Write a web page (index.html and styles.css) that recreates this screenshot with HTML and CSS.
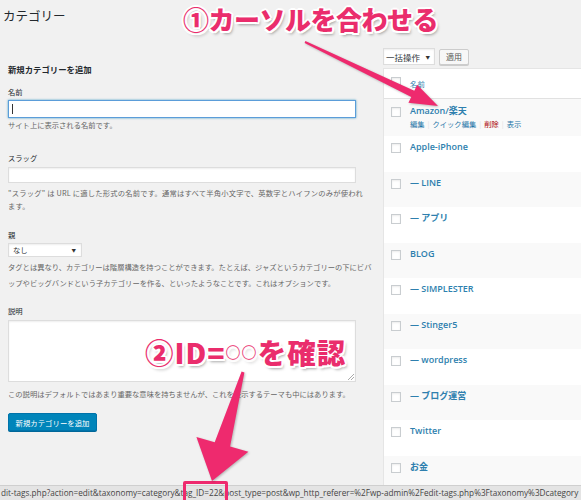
FILE: index.html
```html
<!DOCTYPE html>
<html lang="ja">
<head>
<meta charset="utf-8">
<title>カテゴリー</title>
<link rel="stylesheet" href="styles.css">
</head>
<body>
<div class="page">
  <h1 class="title">カテゴリー</h1>
  <div class="cols">
    <div class="col-left">
      <h2 class="form-title">新規カテゴリーを追加</h2>

      <div class="field f-name">
        <div class="label">名前</div>
        <div class="input focus"><span class="caret"></span></div>
        <p class="desc">サイト上に表示される名前です。</p>
      </div>

      <div class="field f-slug">
        <div class="label">スラッグ</div>
        <div class="input slug"></div>
        <p class="desc">"スラッグ" は URL に適した形式の名前です。通常はすべて半角小文字で、英数字とハイフンのみが使われ<br>ます。</p>
      </div>

      <div class="field f-parent">
        <div class="label">親</div>
        <div class="select parent"><span>なし</span><span class="arr">▼</span></div>
        <p class="desc">タグとは異なり、カテゴリーは階層構造を持つことができます。たとえば、ジャズというカテゴリーの下にビバ<br>ップやビッグバンドという子カテゴリーを作る、といったようなことです。これはオプションです。</p>
      </div>

      <div class="field f-desc">
        <div class="label">説明</div>
        <div class="textarea"></div>
        <p class="desc">この説明はデフォルトではあまり重要な意味を持ちませんが、これを表示するテーマも中にはあります。</p>
      </div>

      <div class="button-primary">新規カテゴリーを追加</div>
    </div>

    <div class="col-right">
      <div class="tablenav">
        <div class="select bulk"><span>一括操作</span><span class="arr">▼</span></div>
        <div class="button">適用</div>
      </div>
      <div class="table">
        <div class="thead">
          <span class="cb"></span><span class="col-name">名前</span>
        </div>
        <div class="trow alt first">
          <span class="cb"></span>
          <div class="cell">
            <div class="name">Amazon/楽天</div>
            <div class="actions"><span class="act">編集</span><span class="sep">|</span><span class="act">クイック編集</span><span class="sep">|</span><span class="act del">削除</span><span class="sep">|</span><span class="act">表示</span></div>
          </div>
        </div>
        <div class="trow"><span class="cb"></span><div class="cell"><div class="name">Apple-iPhone</div></div></div>
        <div class="trow alt"><span class="cb"></span><div class="cell"><div class="name">— LINE</div></div></div>
        <div class="trow"><span class="cb"></span><div class="cell"><div class="name">— アプリ</div></div></div>
        <div class="trow alt"><span class="cb"></span><div class="cell"><div class="name">BLOG</div></div></div>
        <div class="trow"><span class="cb"></span><div class="cell"><div class="name">— SIMPLESTER</div></div></div>
        <div class="trow alt"><span class="cb"></span><div class="cell"><div class="name">— Stinger5</div></div></div>
        <div class="trow"><span class="cb"></span><div class="cell"><div class="name">— wordpress</div></div></div>
        <div class="trow alt"><span class="cb"></span><div class="cell"><div class="name">— ブログ運営</div></div></div>
        <div class="trow"><span class="cb"></span><div class="cell"><div class="name">Twitter</div></div></div>
        <div class="trow alt"><span class="cb"></span><div class="cell"><div class="name">お金</div></div></div>
      </div>
    </div>
  </div>

  <div class="statusbar">dit-tags.php?action=edit&amp;taxonomy=category&amp;tag_ID=22&amp;post_type=post&amp;wp_http_referer=%2Fwp-admin%2Fedit-tags.php%3Ftaxonomy%3Dcategory</div>
  <div class="idbox"></div>

  <svg class="arrows" width="581" height="500" viewBox="0 0 581 500" xmlns="http://www.w3.org/2000/svg">
    <polygon points="305.4,41.1 414.3,90.7 417.2,84.8 438,106 408.4,102.8 411.3,96.9 304.6,42.9" fill="#ee2a6e"/>
    <polygon points="244.4,372.4 230.1,446.6 248.4,451.8 212,481 196.4,437 214.7,442.2 241.6,371.6" fill="#ee2a6e"/>
  </svg>

  <div class="note note1">①カーソルを合わせる</div>
  <div class="note note2">②ID=<span class="dots">○○</span>を確認</div>
</div>
</body>
</html>
```

FILE: styles.css
```css
* { box-sizing: border-box; }

html, body {
  margin: 0;
  padding: 0;
  background: #f1f1f1;
}

body {
  font-family: "Noto Sans CJK JP", "Open Sans", sans-serif;
  color: #444;
  overflow: hidden;
}

.page {
  position: relative;
  width: 581px;
  height: 500px;
  overflow: hidden;
}

.title {
  margin: 0 0 25px 0;
  padding: 9px 0 0 3px;
  font-size: 12.5px;
  line-height: 14px;
  font-weight: 400;
  color: #23282d;
}

.cols {
  display: flex;
  padding-left: 8px;
  gap: 9px;
}

.col-left {
  width: 366px;
  flex: none;
}

.form-title {
  margin: 15px 0 0 0;
  font-size: 8.4px;
  line-height: 12px;
  font-weight: 700;
  color: #23282d;
}

.label {
  font-size: 7.3px;
  line-height: 12px;
  color: #23282d;
}

.desc {
  margin: 0;
  font-size: 7.3px;
  line-height: 12px;
  color: #666;
  white-space: nowrap;
}

.input {
  width: 348px;
  height: 18px;
  background: #fff;
  border: 1px solid #ddd;
  box-shadow: inset 0 1px 2px rgba(0, 0, 0, 0.07);
  margin-top: 2px;
  position: relative;
}

.input.focus {
  border-color: #5b9dd9;
  box-shadow: 0 0 2px rgba(30, 140, 190, 0.8);
}

.caret {
  position: absolute;
  left: 3px;
  top: 3px;
  width: 1px;
  height: 10px;
  background: #333;
}

.f-name .label { margin-top: 11px; }
.f-name .desc { margin-top: 1px; }

.f-slug .label { margin-top: 21px; }
.f-slug .input { height: 16px; margin-top: 3px; }
.f-slug .desc { margin-top: 3.5px; line-height: 13px; letter-spacing: 0.2px; }

.f-parent .label { margin-top: 16.5px; }
.f-parent .desc { margin-top: 2px; line-height: 16px; }

.select {
  display: flex;
  align-items: center;
  justify-content: space-between;
  background: #fff;
  border: 1px solid #ddd;
  box-shadow: inset 0 1px 2px rgba(0, 0, 0, 0.07);
  color: #32373c;
}

.select .arr {
  font-size: 4.5px;
  color: #333;
}

.select.parent {
  width: 74px;
  height: 14px;
  margin-top: 2px;
  padding: 0 5px 0 4px;
  font-size: 7.3px;
}

.f-desc .label { margin-top: 14px; }

.textarea {
  position: relative;
  width: 348px;
  height: 62px;
  margin-top: 3px;
  background: #fff;
  border: 1px solid #ddd;
  box-shadow: inset 0 1px 2px rgba(0, 0, 0, 0.07);
}

.textarea::after {
  content: "";
  position: absolute;
  right: 1px;
  bottom: 1px;
  width: 6px;
  height: 6px;
  background: linear-gradient(135deg, transparent 45%, #aaa 45%, #aaa 55%, transparent 55%, transparent 70%, #aaa 70%, #aaa 80%, transparent 80%);
}

.f-desc .desc { margin-top: 6px; }

.button-primary {
  display: flex;
  align-items: center;
  justify-content: center;
  width: 89px;
  height: 18px;
  margin-top: 13px;
  background: #0085ba;
  border: 1px solid #0073aa;
  border-radius: 2px;
  box-shadow: 0 1px 0 #006799;
  color: #fff;
  font-size: 7.4px;
  white-space: nowrap;
}

/* right column */
.col-right {
  width: 300px;
  flex: none;
}

.tablenav {
  display: flex;
  align-items: center;
  gap: 4px;
  height: 17px;
}

.select.bulk {
  width: 52px;
  height: 17px;
  padding: 0 4px 0 2px;
  font-size: 8.5px;
}

.button {
  display: flex;
  align-items: center;
  justify-content: center;
  width: 30px;
  height: 16px;
  background: #f7f7f7;
  border: 1px solid #ccc;
  border-radius: 2px;
  box-shadow: 0 1px 0 #ccc;
  color: #555;
  font-size: 8px;
}

.table {
  margin-top: 3px;
  background: #fff;
  border: 1px solid #e5e5e5;
  border-right: none;
}

.cb {
  flex: none;
  width: 10px;
  height: 10px;
  background: #fff;
  border: 1px solid #c9cdd0;
  box-shadow: inset 0 1px 2px rgba(0, 0, 0, 0.08);
}

.thead {
  display: flex;
  align-items: flex-start;
  gap: 9px;
  height: 30px;
  padding: 8px 0 0 7px;
  border-bottom: 1px solid #e1e1e1;
}

.col-name {
  font-size: 7.4px;
  line-height: 12px;
  margin-top: 1px;
  color: #2e7fae;
}

.trow {
  display: flex;
  align-items: flex-start;
  gap: 9px;
  height: 35.5px;
  padding: 5px 0 0 7px;
}

.trow.first {
  height: 37px;
  padding-top: 6px;
}

.trow.alt {
  background: #f9f9f9;
}

.trow .cb {
  margin-top: 2px;
}

.name {
  font-family: "Open Sans", "Noto Sans CJK JP", sans-serif;
  font-weight: 600;
  font-size: 9px;
  line-height: 12px;
  color: #2e7fae;
  white-space: nowrap;
}

.actions {
  margin-top: 1px;
  display: flex;
  align-items: center;
  font-size: 7.3px;
  line-height: 12px;
  white-space: nowrap;
}

.act { color: #1f77a8; }
.act.del { color: #a00; }

.sep {
  color: #ddd;
  padding: 0 3px;
  font-size: 7px;
}

/* browser status bubble */
.statusbar {
  position: absolute;
  left: 0;
  right: 0;
  bottom: 0;
  height: 15px;
  padding-left: 1px;
  background: #e4e4e4;
  border-top: 1px solid #cfcfcf;
  font-family: "Open Sans", sans-serif;
  font-size: 8.2px;
  line-height: 14px;
  color: #444;
  white-space: nowrap;
  overflow: hidden;
}

.idbox {
  position: absolute;
  left: 183px;
  top: 481px;
  width: 45px;
  height: 22px;
  border: 3px solid #ee2a6e;
  border-radius: 2px;
}

.arrows {
  position: absolute;
  left: 0;
  top: 0;
  pointer-events: none;
  filter: drop-shadow(1px 1px 1px rgba(0, 0, 0, 0.25));
}

.note {
  position: absolute;
  font-family: "Noto Sans CJK JP", sans-serif;
  font-weight: 900;
  color: #ea2d6c;
  white-space: nowrap;
  text-shadow:
    2px 0 0 #fff, -2px 0 0 #fff, 0 2px 0 #fff, 0 -2px 0 #fff,
    1.5px 1.5px 0 #fff, -1.5px 1.5px 0 #fff, 1.5px -1.5px 0 #fff, -1.5px -1.5px 0 #fff,
    2px 3px 3px rgba(0, 0, 0, 0.35);
}

.note1 {
  left: 183px;
  top: 0;
  font-size: 26px;
  line-height: 38px;
  letter-spacing: -0.5px;
}

.note2 {
  left: 145px;
  top: 332px;
  font-size: 28.5px;
  line-height: 40px;
  letter-spacing: 1px;
}

.note2 .dots {
  font-size: 15px;
  vertical-align: 6px;
}
```
